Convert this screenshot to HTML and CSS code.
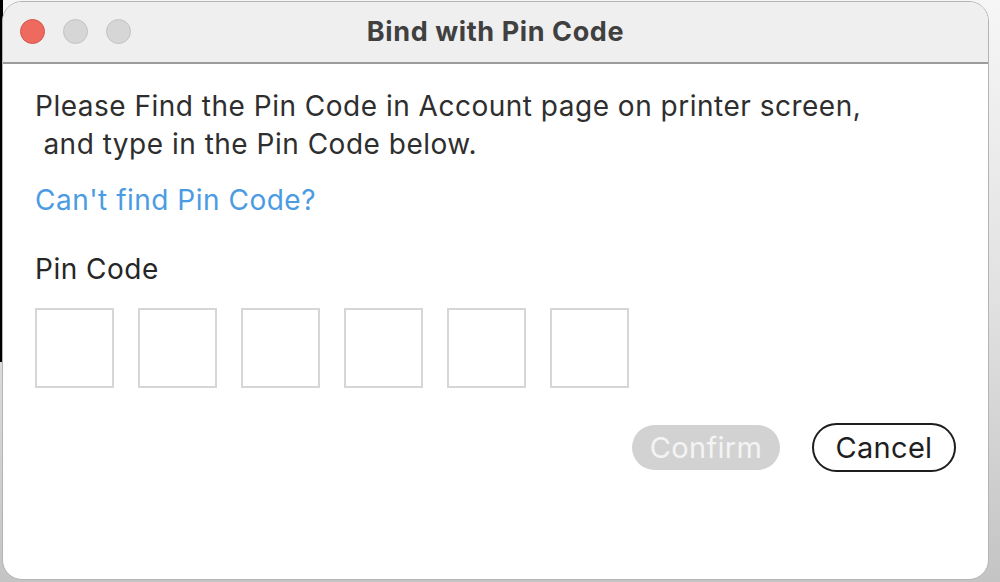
FILE: index.html
```html
<!DOCTYPE html>
<html lang="en">
<head>
<meta charset="utf-8">
<title>Bind with Pin Code</title>
<link rel="stylesheet" href="styles.css">
</head>
<body>
<div class="backdrop">
  <div class="window">
    <div class="titlebar">
      <div class="lights">
        <span class="light close"></span>
        <span class="light"></span>
        <span class="light"></span>
      </div>
      <div class="title">Bind with Pin Code</div>
      <div class="spacer"></div>
    </div>
    <div class="content">
      <p class="intro">Please Find the Pin Code in Account page on printer screen,<br>&nbsp;and type in the Pin Code below.</p>
      <a class="help" href="#">Can't find Pin Code?</a>
      <div class="label">Pin Code</div>
      <div class="pins">
        <input class="pin" maxlength="1">
        <input class="pin" maxlength="1">
        <input class="pin" maxlength="1">
        <input class="pin" maxlength="1">
        <input class="pin" maxlength="1">
        <input class="pin" maxlength="1">
      </div>
      <div class="actions">
        <button class="btn confirm" disabled>Confirm</button>
        <button class="btn cancel">Cancel</button>
      </div>
    </div>
  </div>
</div>
</body>
</html>
```
FILE: styles.css
```css
html, body {
  margin: 0;
  padding: 0;
}
body {
  width: 1000px;
  height: 582px;
  overflow: hidden;
  background: linear-gradient(180deg, #f6f6f6 0%, #e2e2e2 50%, #c4c4c4 100%);
  font-family: Inter, "Noto Sans", "Liberation Sans", sans-serif;
}
.backdrop {
  height: 582px;
  padding: 1px 0 0 2px;
  box-sizing: border-box;
  background: linear-gradient(90deg, #000 0, #000 3px, transparent 3px) no-repeat;
  background-size: 3px 362px;
}
.window {
  width: 987px;
  height: 579px;
  box-sizing: border-box;
  border: 1px solid #b4b4b4;
  border-radius: 20px;
  overflow: hidden;
  background: #fff;
  display: flex;
  flex-direction: column;
}
.titlebar {
  height: 62px;
  box-sizing: border-box;
  flex: none;
  background: #efefef;
  border-bottom: 2px solid #9c9c9c;
  display: grid;
  grid-template-columns: 1fr auto 1fr;
  align-items: center;
  padding: 0 0 1px 0;
}
.lights {
  display: flex;
  gap: 18px;
  padding-left: 17px;
}
.light {
  width: 25px;
  height: 25px;
  box-sizing: border-box;
  border-radius: 50%;
  background: #d6d6d6;
  border: 1px solid #c2c2c2;
}
.light.close {
  background: #ee6a5f;
  border-color: #d2554b;
}
.title {
  font-size: 27px;
  font-weight: 700;
  color: #404040;
  letter-spacing: 0.6px;
}
.content {
  padding: 23px 0 0 32px;
  display: flex;
  flex-direction: column;
}
.intro,
.help,
.label {
  font-size: 28px;
  line-height: 38px;
  letter-spacing: 0.5px;
}
.intro {
  margin: 0;
  color: #2e2e2e;
}
.help {
  margin-top: 18px;
  color: #4b9be3;
  text-decoration: none;
  align-self: flex-start;
}
.label {
  margin-top: 31px;
  color: #262626;
}
.pins {
  margin-top: 20px;
  display: flex;
  gap: 24px;
}
.pin {
  width: 79px;
  height: 80px;
  box-sizing: border-box;
  border: 2px solid #d6d6d6;
  border-radius: 0;
  padding: 0;
  margin: 0;
  background: #fff;
  outline: none;
}
.actions {
  margin-top: 35px;
  padding-right: 32px;
  display: flex;
  justify-content: flex-end;
  align-items: center;
  gap: 32px;
}
.btn {
  font-family: inherit;
  font-size: 29px;
  padding: 0;
  box-sizing: border-box;
  line-height: 1;
  letter-spacing: 0.3px;
}
.confirm {
  width: 148px;
  height: 45px;
  border-radius: 23px;
  background: #d2d2d2;
  color: #f4f4f4;
  border: none;
}
.cancel {
  width: 144px;
  height: 49px;
  border-radius: 25px;
  background: #fff;
  color: #1e1e1e;
  border: 2px solid #1e1e1e;
}
```
